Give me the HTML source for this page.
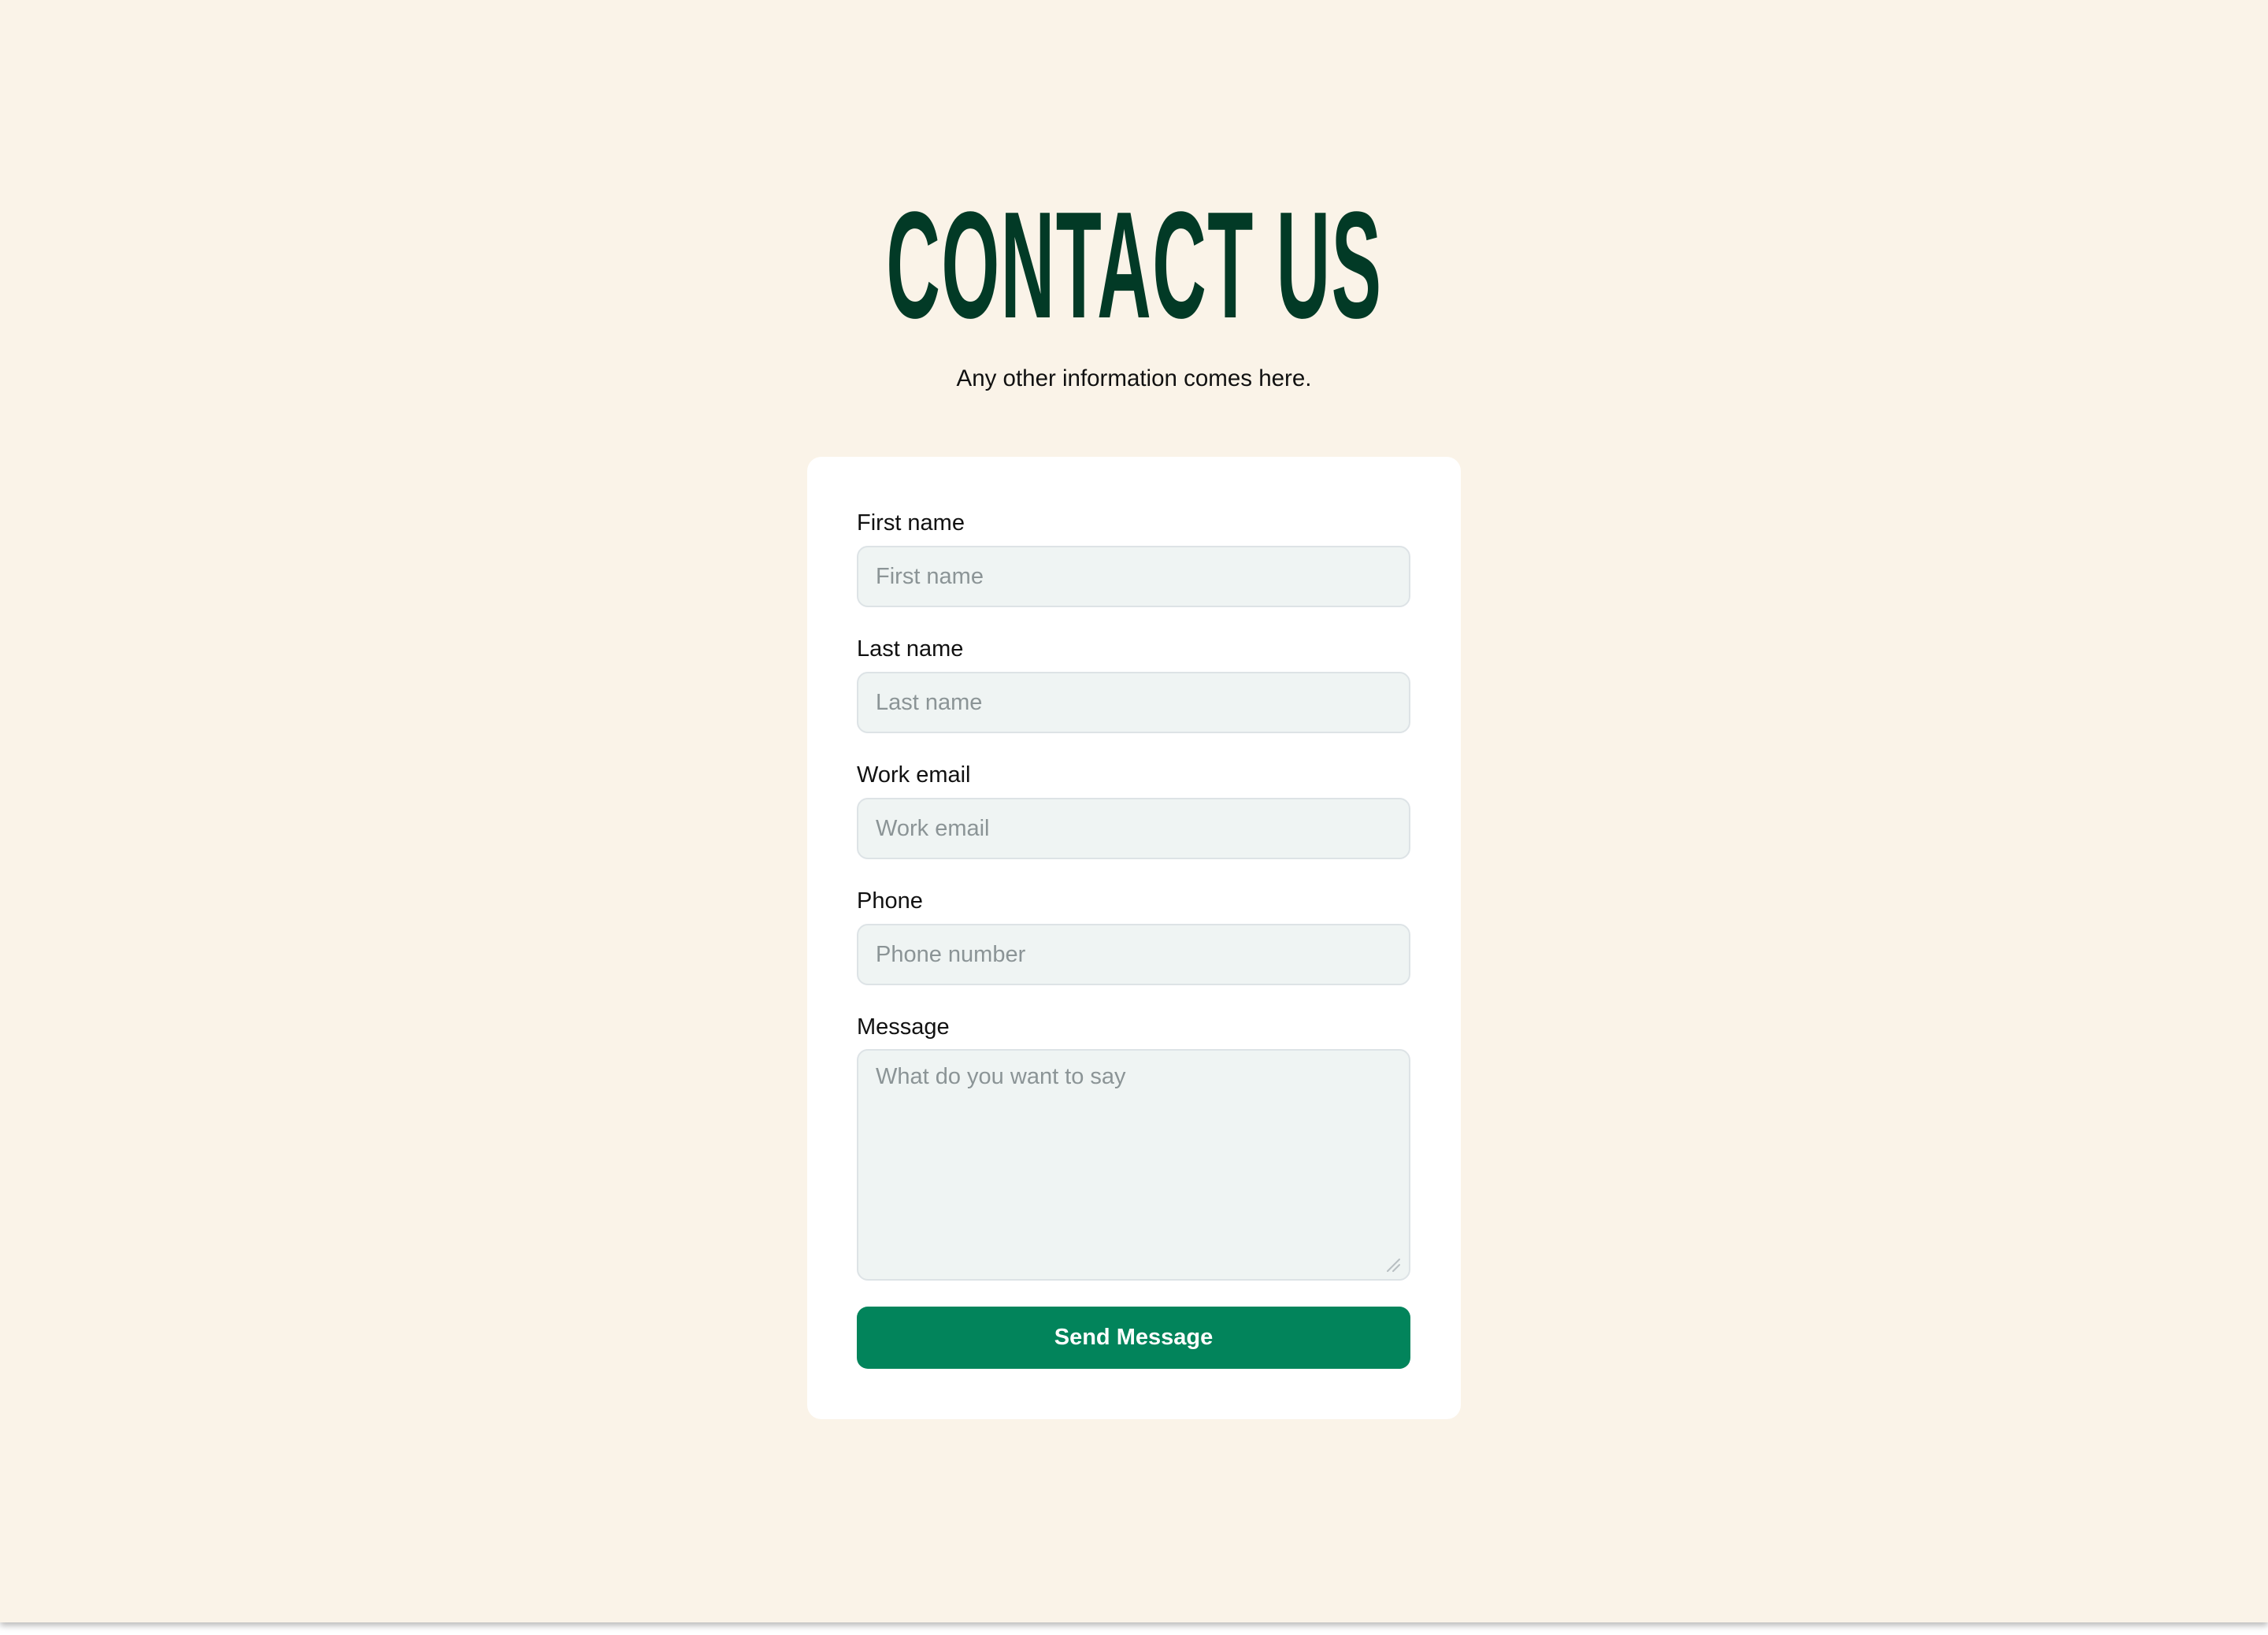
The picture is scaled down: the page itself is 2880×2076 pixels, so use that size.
<!DOCTYPE html>
<html><head><meta charset="utf-8"><style>
html,body{margin:0;padding:0}
body{width:2880px;height:2076px;position:relative;background:#fff;font-family:"Liberation Sans",sans-serif;overflow:hidden}
#bg{position:absolute;left:0;top:0;width:2880px;height:2060px;background:#faf3e8;box-shadow:0 4px 8px rgba(0,0,0,0.28)}
h1{position:absolute;left:0;width:2880px;top:236px;margin:0;text-align:center;font-size:193px;line-height:200px;font-weight:bold;color:#023a26;letter-spacing:3px}
h1 span{display:inline-block;transform:scaleX(0.492);transform-origin:center}
.sub{position:absolute;left:0;width:2880px;top:461px;text-align:center;font-size:29.5px;line-height:40px;color:#111}
.card{position:absolute;left:1025px;top:580px;width:830px;height:1222px;background:#fff;border-radius:18px}
.lbl{position:absolute;left:1088px;font-size:29px;line-height:34px;color:#111}
.inp{position:absolute;left:1088px;width:699px;height:74px;background:#eff4f3;border:2px solid #dde3e6;border-radius:14px}
.ph{position:absolute;left:22px;font-size:29px;line-height:34px;color:#8b9496}
.btn{position:absolute;left:1088px;top:1659px;width:703px;height:79px;background:#02845b;border-radius:14px;color:#fff;font-weight:bold;font-size:29px;line-height:79px;text-align:center}
</style></head><body>
<div id="bg"></div>
<h1><span>CONTACT US</span></h1>
<div class="sub">Any other information comes here.</div>
<div class="card"></div>
<div class="lbl" style="top:647px">First name</div>
<div class="inp" style="top:693px"><div class="ph" style="top:20px">First name</div></div>
<div class="lbl" style="top:807px">Last name</div>
<div class="inp" style="top:853px"><div class="ph" style="top:20px">Last name</div></div>
<div class="lbl" style="top:967px">Work email</div>
<div class="inp" style="top:1013px"><div class="ph" style="top:20px">Work email</div></div>
<div class="lbl" style="top:1127px">Phone</div>
<div class="inp" style="top:1173px"><div class="ph" style="top:20px">Phone number</div></div>
<div class="lbl" style="top:1287px">Message</div>
<div class="inp" style="top:1332px;height:290px"><div class="ph" style="top:16px">What do you want to say</div>
<svg style="position:absolute;right:10px;bottom:8px" width="20" height="20" viewBox="0 0 20 20"><path d="M3 18L18 3M10 18L18 10" stroke="#b8bfc2" stroke-width="2" stroke-linecap="round"/></svg></div>
<div class="btn">Send Message</div>
</body></html>
